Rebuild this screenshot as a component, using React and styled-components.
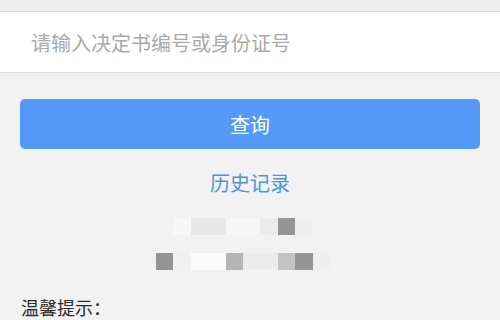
import React from 'react';
import styled, { createGlobalStyle } from 'styled-components';

const GlobalStyle = createGlobalStyle`
  body {
    margin: 0;
    background: #f2f2f2;
    font-family: "Noto Sans CJK SC", "Noto Sans", sans-serif;
  }
`;

const Page = styled.div`
  width: 500px;
  height: 320px;
  overflow: hidden;
  background: #f2f2f2;
`;

const TopStrip = styled.div`
  height: 11px;
  background: #eeeeee;
  border-bottom: 1px solid #dcdcdc;
`;

const InputRow = styled.input`
  display: block;
  box-sizing: border-box;
  width: 100%;
  height: 61px;
  margin: 0;
  padding: 0 0 0 31px;
  border: none;
  border-bottom: 1px solid #dedede;
  background: #fff;
  font-family: inherit;
  font-size: 20px;
  outline: none;
  &::placeholder {
    color: #aaaaaa;
  }
`;

const QueryButton = styled.button`
  display: block;
  width: 460px;
  height: 50px;
  margin: 26px 20px 0;
  border: none;
  border-radius: 5px;
  background: #5599f6;
  color: #fff;
  font-family: inherit;
  font-size: 20px;
`;

const HistoryLink = styled.div`
  margin-top: 20px;
  text-align: center;
  color: #4f92dc;
  font-size: 20px;
  line-height: 28px;
`;

const Mosaic = styled.div`
  display: grid;
  grid-template-columns: repeat(10, 17.4px);
  grid-auto-rows: 17px;
  row-gap: 18px;
  margin: 21px 0 0 156px;
  width: max-content;
`;

const Cell = styled.div`
  grid-column: ${(p) => p.$col} / span ${(p) => p.$span || 1};
  grid-row: ${(p) => p.$row};
  background: ${(p) => p.$color};
`;

const Tip = styled.div`
  margin: 24px 0 0 21px;
  color: #2a2a2a;
  font-size: 18px;
  line-height: 26px;
`;

const cells = [
  { row: 1, col: 2, color: '#f7f7f7' },
  { row: 1, col: 3, span: 2, color: '#e8e8e8' },
  { row: 1, col: 5, span: 2, color: '#f6f6f6' },
  { row: 1, col: 7, color: '#ebebeb' },
  { row: 1, col: 8, color: '#959595' },
  { row: 1, col: 9, color: '#efefef' },
  { row: 2, col: 1, color: '#939393' },
  { row: 2, col: 2, color: '#f0f0f0' },
  { row: 2, col: 3, span: 2, color: '#fafafa' },
  { row: 2, col: 5, color: '#b5b5b5' },
  { row: 2, col: 6, span: 2, color: '#ebebeb' },
  { row: 2, col: 8, color: '#c3c3c3' },
  { row: 2, col: 9, color: '#959595' },
  { row: 2, col: 10, color: '#efefef' },
];

export default function App() {
  return (
    <Page>
      <GlobalStyle />
      <TopStrip />
      <InputRow placeholder="请输入决定书编号或身份证号" />
      <QueryButton>查询</QueryButton>
      <HistoryLink>历史记录</HistoryLink>
      <Mosaic>
        {cells.map((c, i) => (
          <Cell key={i} $row={c.row} $col={c.col} $span={c.span} $color={c.color} />
        ))}
      </Mosaic>
      <Tip>温馨提示：</Tip>
    </Page>
  );
}
